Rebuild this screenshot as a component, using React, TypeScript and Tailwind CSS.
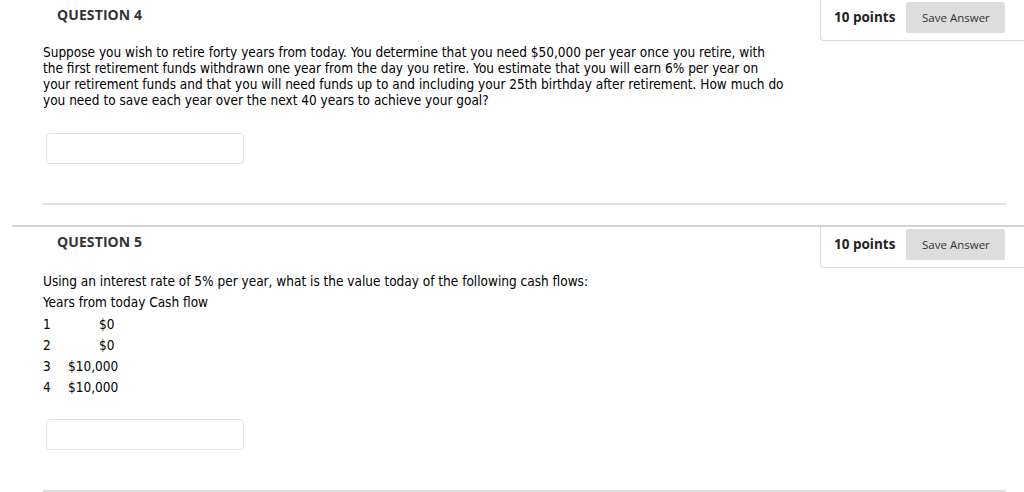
const bodyFont = { fontFamily: '"DejaVu Sans Condensed", "DejaVu Sans", sans-serif' };

function PointsBox() {
  return (
    <div className="flex h-[41px] w-[204px] shrink-0 items-start rounded-bl-[4px] border-b border-l border-[#d9d9d9] pl-[13px] pt-[2px]">
      <span className="mt-[5px] text-[13.5px] font-bold text-[#222]">10 points</span>
      <button
        type="button"
        className="ml-[11px] h-[31px] w-[99px] rounded-[2px] bg-[#dddddd] text-[11.5px] text-[#333]"
      >
        Save Answer
      </button>
    </div>
  );
}

function Header({ title }: { title: string }) {
  return (
    <div className="flex items-start justify-between">
      <h2 className="pl-[57px] pt-[4px] text-[14px] font-bold tracking-[0.1px] text-[#333]">{title}</h2>
      <PointsBox />
    </div>
  );
}

function AnswerBox({ top }: { top: string }) {
  return (
    <div className={`${top} ml-[46px] h-[31px] w-[198px] rounded-[4px] border border-[#e2e2e2] bg-white`} />
  );
}

const flows = [
  { n: "1", v: "$0", pad: "pl-[31px]" },
  { n: "2", v: "$0", pad: "pl-[31px]" },
  { n: "3", v: "$10,000", pad: "" },
  { n: "4", v: "$10,000", pad: "" },
];

export default function App() {
  return (
    <div className="h-[492px] w-[1024px] overflow-hidden bg-white" style={{ fontFamily: '"Open Sans", sans-serif' }}>
      <section>
        <Header title="QUESTION 4" />
        <p className="mt-[3px] w-[800px] pl-[43px] text-[13.5px] leading-[16px] text-black" style={bodyFont}>
          Suppose you wish to retire forty years from today. You determine that you need $50,000 per year once you retire, with
          <br />
          the first retirement funds withdrawn one year from the day you retire. You estimate that you will earn 6% per year on
          <br />
          your retirement funds and that you will need funds up to and including your 25th birthday after retirement. How much do
          <br />
          you need to save each year over the next 40 years to achieve your goal?
        </p>
        <AnswerBox top="mt-[25px]" />
        <div className="ml-[43px] mt-[39px] h-[2px] w-[963px] bg-[#dedede]" />
      </section>

      <div className="ml-[12px] mt-[20px] h-[2px] bg-[#d4d4d4]" />

      <section>
        <Header title="QUESTION 5" />
        <div className="mt-[3px] pl-[43px] text-[13.5px] leading-[21.3px] text-black" style={bodyFont}>
          <div>Using an interest rate of 5% per year, what is the value today of the following cash flows:</div>
          <div>Years from today Cash flow</div>
          {flows.map((f) => (
            <div key={f.n} className="flex">
              <span className="w-[25px]">{f.n}</span>
              <span className={f.pad}>{f.v}</span>
            </div>
          ))}
        </div>
        <AnswerBox top="mt-[20px]" />
        <div className="ml-[43px] mt-[40px] h-[2px] w-[963px] bg-[#dedede]" />
      </section>
    </div>
  );
}
